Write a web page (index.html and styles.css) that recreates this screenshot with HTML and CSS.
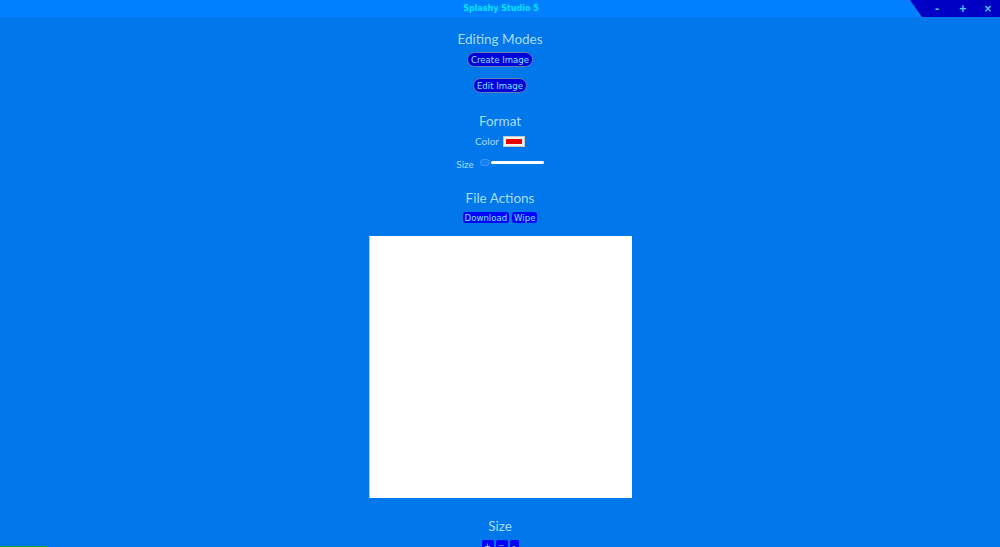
FILE: index.html
```html
<!DOCTYPE html>
<html>
<head>
<meta charset="utf-8">
<title>Splashy Studio 5</title>
<link rel="stylesheet" href="styles.css">
</head>
<body>
<header class="titlebar">
  <div class="title">Splashy Studio 5</div>
  <div class="controls">
    <span class="ctl">-</span>
    <span class="ctl">+</span>
    <span class="ctl last">×</span>
  </div>
</header>
<main class="app">
  <h2 class="heading">Editing Modes</h2>
  <button class="btn pill">Create Image</button>
  <button class="btn pill second">Edit Image</button>

  <h2 class="heading format">Format</h2>
  <div class="row color-row">
    <span class="label">Color</span>
    <span class="swatch"><span class="swatch-fill"></span></span>
  </div>
  <div class="row size-row">
    <span class="label">Size</span>
    <span class="slider"><span class="thumb"></span><span class="track"></span></span>
  </div>

  <h2 class="heading files">File Actions</h2>
  <div class="row actions">
    <button class="btn small">Download</button>
    <button class="btn small">Wipe</button>
  </div>

  <div class="canvas"></div>

  <h2 class="heading sizehead">Size</h2>
  <div class="row zoom">
    <button class="btn tiny">+</button>
    <button class="btn tiny">=</button>
    <button class="btn tiny">-</button>
  </div>
</main>
<div class="progress"></div>
</body>
</html>
```

FILE: styles.css
```css
html, body {
  margin: 0;
  padding: 0;
  height: 547px;
  overflow: hidden;
}
body {
  background: #0077ea;
  font-family: Lato, "Noto Sans", sans-serif;
  position: relative;
}
.titlebar {
  height: 17px;
  background: #0080ff;
  position: relative;
  display: flex;
  justify-content: center;
  align-items: center;
}
.title {
  font-family: "DejaVu Sans", Verdana, sans-serif;
  font-weight: bold;
  font-size: 8px;
  color: #00e4ff;
  margin-left: 2px;
}
.controls {
  position: absolute;
  right: 0;
  top: 0;
  height: 17px;
  width: 90px;
  background: #0000c4;
  clip-path: polygon(0 0, 100% 0, 100% 100%, 12px 100%);
  display: flex;
  justify-content: flex-end;
  align-items: center;
}
.ctl {
  width: 26px;
  text-align: center;
  color: #40d8ff;
  font-family: "DejaVu Sans", sans-serif;
  font-weight: bold;
  font-size: 10px;
  line-height: 17px;
}
.ctl.last { width: 24px; }
.app {
  display: flex;
  flex-direction: column;
  align-items: center;
}
.heading {
  margin: 0;
  font-family: Lato, "Noto Sans", sans-serif;
  font-weight: normal;
  font-size: 13.5px;
  line-height: 18px;
  color: #a8dcff;
  margin-top: 13px;
}
.format { margin-top: 19px; }
.files { margin-top: 19px; }
.sizehead { margin-top: 19px; }
.btn {
  font-family: "DejaVu Sans Condensed", "DejaVu Sans", sans-serif;
  background: #0000d8;
  color: #80e4ff;
  border: 1px solid #6b7fb0;
  padding: 0;
  cursor: pointer;
}
.pill {
  height: 15px;
  border-radius: 8px;
  font-size: 9.5px;
  line-height: 12px;
  padding: 0 3px;
  margin-top: 4px;
}
.pill.second { margin-top: 11px; }
.row {
  display: flex;
  align-items: center;
  gap: 4px;
}
.label {
  font-family: Lato, "Noto Sans", sans-serif;
  font-size: 10px;
  color: #a8dcff;
}
.color-row { margin-top: 5px; }
.swatch {
  width: 22px;
  height: 11px;
  background: #f4f4f4;
  border: 1px solid #c8c8c8;
  display: flex;
  align-items: center;
  justify-content: center;
  box-sizing: border-box;
}
.swatch-fill {
  width: 16px;
  height: 5px;
  background: #ee0000;
}
.size-row { margin-top: 8px; }
.size-row .label { margin-top: 3px; }
.slider {
  display: flex;
  align-items: center;
  width: 66px;
}
.thumb {
  width: 8px;
  height: 5px;
  background: #1680f4;
  border: 1px solid #3f9cff;
  border-radius: 4px;
  margin-left: 2px;
}
.track {
  flex: 1;
  height: 3px;
  background: #ffffff;
  border-radius: 2px;
  margin-left: 1px;
}
.actions { margin-top: 5px; gap: 3px; }
.small {
  height: 11px;
  font-size: 9.5px;
  line-height: 9px;
  border-radius: 3px;
  padding: 0 2px;
  border: none;
  background: #0000ff;
}
.canvas {
  width: 262px;
  height: 262px;
  background: #ffffff;
  margin-top: 13px;
  margin-left: 1px;
  box-shadow: -1px 0 0 #9fd0ff;
}
.zoom { gap: 2px; margin-top: 5px; }
.tiny {
  width: 12px;
  height: 12px;
  font-size: 9px;
  line-height: 9px;
  border-radius: 2px;
  border: none;
  background: #0000ff;
  color: #9fe0ff;
}
.tiny:last-child { width: 9px; }
.progress {
  position: absolute;
  left: 0;
  bottom: 0;
  width: 48px;
  height: 1px;
  background: #1ea33a;
}
```
